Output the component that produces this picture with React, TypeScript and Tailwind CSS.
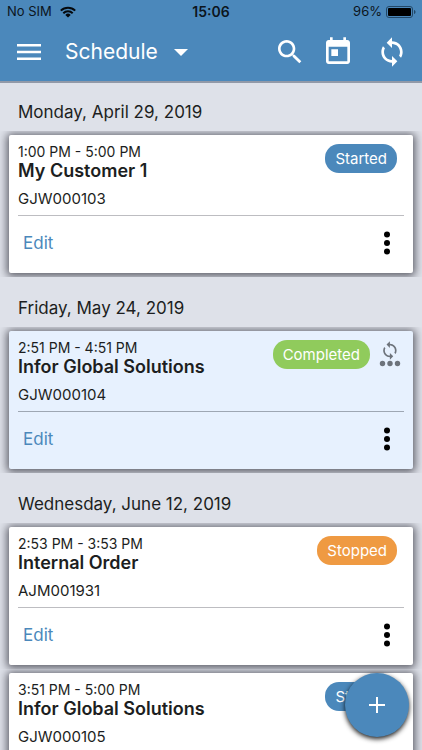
import type { ReactNode } from "react";

type Status = "Started" | "Completed" | "Stopped";

interface Job {
  id: string;
  time: string;
  customer: string;
  status: Status;
  pendingSync?: boolean;
}

interface Day {
  label: string;
  jobs: Job[];
}

const days: Day[] = [
  {
    label: "Monday, April 29, 2019",
    jobs: [{ id: "GJW000103", time: "1:00 PM - 5:00 PM", customer: "My Customer 1", status: "Started" }],
  },
  {
    label: "Friday, May 24, 2019",
    jobs: [
      { id: "GJW000104", time: "2:51 PM - 4:51 PM", customer: "Infor Global Solutions", status: "Completed", pendingSync: true },
    ],
  },
  {
    label: "Wednesday, June 12, 2019",
    jobs: [
      { id: "AJM001931", time: "2:53 PM - 3:53 PM", customer: "Internal Order", status: "Stopped" },
      { id: "GJW000105", time: "3:51 PM - 5:00 PM", customer: "Infor Global Solutions", status: "Started" },
    ],
  },
];

const badgeColour: Record<Status, string> = {
  Started: "bg-[#4b88bb]",
  Completed: "bg-[#90cb5c]",
  Stopped: "bg-[#ef9a42]",
};

const SYNC_PATH =
  "M12 4V1L8 5l4 4V6c3.31 0 6 2.69 6 6 0 1.01-.25 1.97-.7 2.8l1.46 1.46C19.54 15.03 20 13.57 20 12c0-4.42-3.58-8-8-8zm0 14c-3.31 0-6-2.69-6-6 0-1.01.25-1.97.7-2.8L5.24 7.74C4.46 8.97 4 10.43 4 12c0 4.42 3.58 8 8 8v3l4-4-4-4v3z";

function StatusBar() {
  return (
    <div className="grid h-6 grid-cols-3 items-center px-[6px] text-[13px] text-[#0c151d]">
      <div className="flex items-center gap-2 pl-px">
        <span>No SIM</span>
        <svg width="16" height="12" viewBox="0 0 16 12" fill="none" stroke="#05090d" strokeWidth="2" aria-hidden="true">
          <path d="M0.8 4.6a10.3 10.3 0 0 1 14.4 0" />
          <path d="M3.3 7.3a6.7 6.7 0 0 1 9.4 0" />
          <path d="M8 11.5L5.3 8.9a3.9 3.9 0 0 1 5.4 0z" fill="#05090d" stroke="none" />
        </svg>
      </div>
      <span className="text-center text-sm font-semibold">15:06</span>
      <div className="flex items-center justify-end gap-1">
        <span>96%</span>
        <svg width="30" height="12" viewBox="0 0 30 12" aria-hidden="true">
          <rect x="0.5" y="0.5" width="26" height="11" rx="2.5" fill="none" stroke="#234867" />
          <rect x="2" y="2" width="23" height="8" rx="1" fill="#000" />
          <path d="M28 4v4c1-.3 1.500-1 1.500-2S29 4.300 28 4z" fill="#234867" />
        </svg>
      </div>
    </div>
  );
}

function IconButton({ label, children }: { label: string; children: ReactNode }) {
  return (
    <button type="button" aria-label={label} className="flex size-8 items-center justify-center">
      {children}
    </button>
  );
}

function Header() {
  return (
    <header className="relative z-10 h-[81px] shrink-0 bg-[#4b88bb] shadow-[0_2px_0_#9199a8]">
      <StatusBar />
      <div className="flex h-14 items-center justify-between pr-[14px] pl-[13px] text-white">
        <div className="flex items-center gap-5">
          <IconButton label="Open menu">
            <svg width="24" height="16" viewBox="0 0 24 16" fill="#fff">
              <path d="M0 0h24v2.600H0zM0 6.700h24v2.600H0zM0 13.400h24V16H0z" />
            </svg>
          </IconButton>
          <button type="button" className="flex items-center gap-4 text-[21px]">
            Schedule
            <svg width="14" height="7" viewBox="0 0 14 7" fill="#fff" aria-hidden="true">
              <path d="M0 0h14L7 7z" />
            </svg>
          </button>
        </div>
        <div className="flex items-center gap-4">
          <IconButton label="Search">
            <svg width="32" height="32" viewBox="0 0 24 24" fill="#fff">
              <path d="M15.500 14h-.79l-.28-.27C15.410 12.590 16 11.110 16 9.500 16 5.910 13.090 3 9.500 3S3 5.910 3 9.500 5.910 16 9.500 16c1.610 0 3.090-.59 4.230-1.570l.27.28v.79l5 4.990L20.490 19l-4.990-5zm-6 0C7.010 14 5 11.990 5 9.500S7.010 5 9.500 5 14 7.010 14 9.500 11.990 14 9.500 14z" />
            </svg>
          </IconButton>
          <IconButton label="Today">
            <svg width="32" height="32" viewBox="0 0 24 24" fill="#fff">
              <path d="M19 3h-1V1h-2v2H8V1H6v2H5c-1.110 0-1.990.9-1.990 2L3 19c0 1.100.89 2 2 2h14c1.100 0 2-.9 2-2V5c0-1.100-.9-2-2-2zm0 16H5V8h14v11zM7 10h5v5H7z" />
            </svg>
          </IconButton>
          <div className="pl-[6px]">
            <IconButton label="Synchronise">
              <svg width="32" height="32" viewBox="0 0 24 24" fill="#fff">
                <path d={SYNC_PATH} />
              </svg>
            </IconButton>
          </div>
        </div>
      </div>
    </header>
  );
}

function PendingSyncIcon() {
  return (
    <svg width="22" height="27" viewBox="0 0 22 27" fill="#6d737b" role="img" aria-label="Waiting to sync">
      <g transform="translate(0.8 0.4) scale(0.84)">
        <path d={SYNC_PATH} />
      </g>
      <circle cx="3.500" cy="23.500" r="2.700" />
      <circle cx="11" cy="23.500" r="2.700" />
      <circle cx="18.500" cy="23.500" r="2.700" />
    </svg>
  );
}

function JobCard({ job }: { job: Job }) {
  return (
    <li className="overflow-hidden px-[9px] py-1">
      <article
        className={`rounded-xs px-[9px] shadow-[0_1px_9px_2px_rgba(20,20,30,0.65)] ${job.pendingSync ? "border-[#9ea7b3] bg-[#e7f1fe]" : "border-[#bdbdc1] bg-white"}`}
      >
        <div className="flex h-[81px] justify-between border-b border-inherit pt-2">
          <div>
            <p className="text-sm leading-[18px]">{job.time}</p>
            <h3 className="text-lg leading-5 font-semibold">{job.customer}</h3>
            <p className="mt-2 text-[15px] leading-5">{job.id}</p>
          </div>
          <div className={`flex items-start gap-[9px] pt-px ${job.pendingSync ? "pr-[3px]" : "pr-[7px]"}`}>
            <span className={`rounded-[14px] px-[10px] text-[15px] leading-[29px] text-white ${badgeColour[job.status]}`}>
              {job.status}
            </span>
            {job.pendingSync && <PendingSyncIcon />}
          </div>
        </div>
        <div className="flex h-[57px] items-start justify-between px-[5px] pt-[11px]">
          <button type="button" className="text-[17px] leading-8 text-[#4b88bb]">
            Edit
          </button>
          <button type="button" aria-label={`More actions for ${job.id}`} className="flex h-8 w-6 items-center justify-center">
            <svg width="6" height="24" viewBox="0 0 6 24" fill="#000">
              <circle cx="3" cy="3.500" r="3" />
              <circle cx="3" cy="12" r="3" />
              <circle cx="3" cy="20.500" r="3" />
            </svg>
          </button>
        </div>
      </article>
    </li>
  );
}

export default function App() {
  return (
    <div className="flex h-screen flex-col overflow-hidden bg-[#dee1e9] font-[Inter,'Liberation_Sans',sans-serif] text-[#1c1e21]">
      <Header />
      <main className="min-h-0 flex-1 overflow-hidden">
        {days.map((day) => (
          <section key={day.label}>
            <h2 className="h-[50px] px-[18px] pt-[19px] text-[17px] leading-6">{day.label}</h2>
            <ul>
              {day.jobs.map((job) => (
                <JobCard key={job.id} job={job} />
              ))}
            </ul>
          </section>
        ))}
      </main>
      <button
        type="button"
        aria-label="Add order"
        className="fixed right-[13px] bottom-[13px] z-20 flex size-16 items-center justify-center rounded-full bg-[#4b88bb] shadow-[0_2px_5px_rgba(0,0,0,0.9)]"
      >
        <svg width="16" height="16" viewBox="0 0 16 16" stroke="#fff" strokeWidth="2">
          <path d="M8 0v16M0 8h16" />
        </svg>
      </button>
    </div>
  );
}
